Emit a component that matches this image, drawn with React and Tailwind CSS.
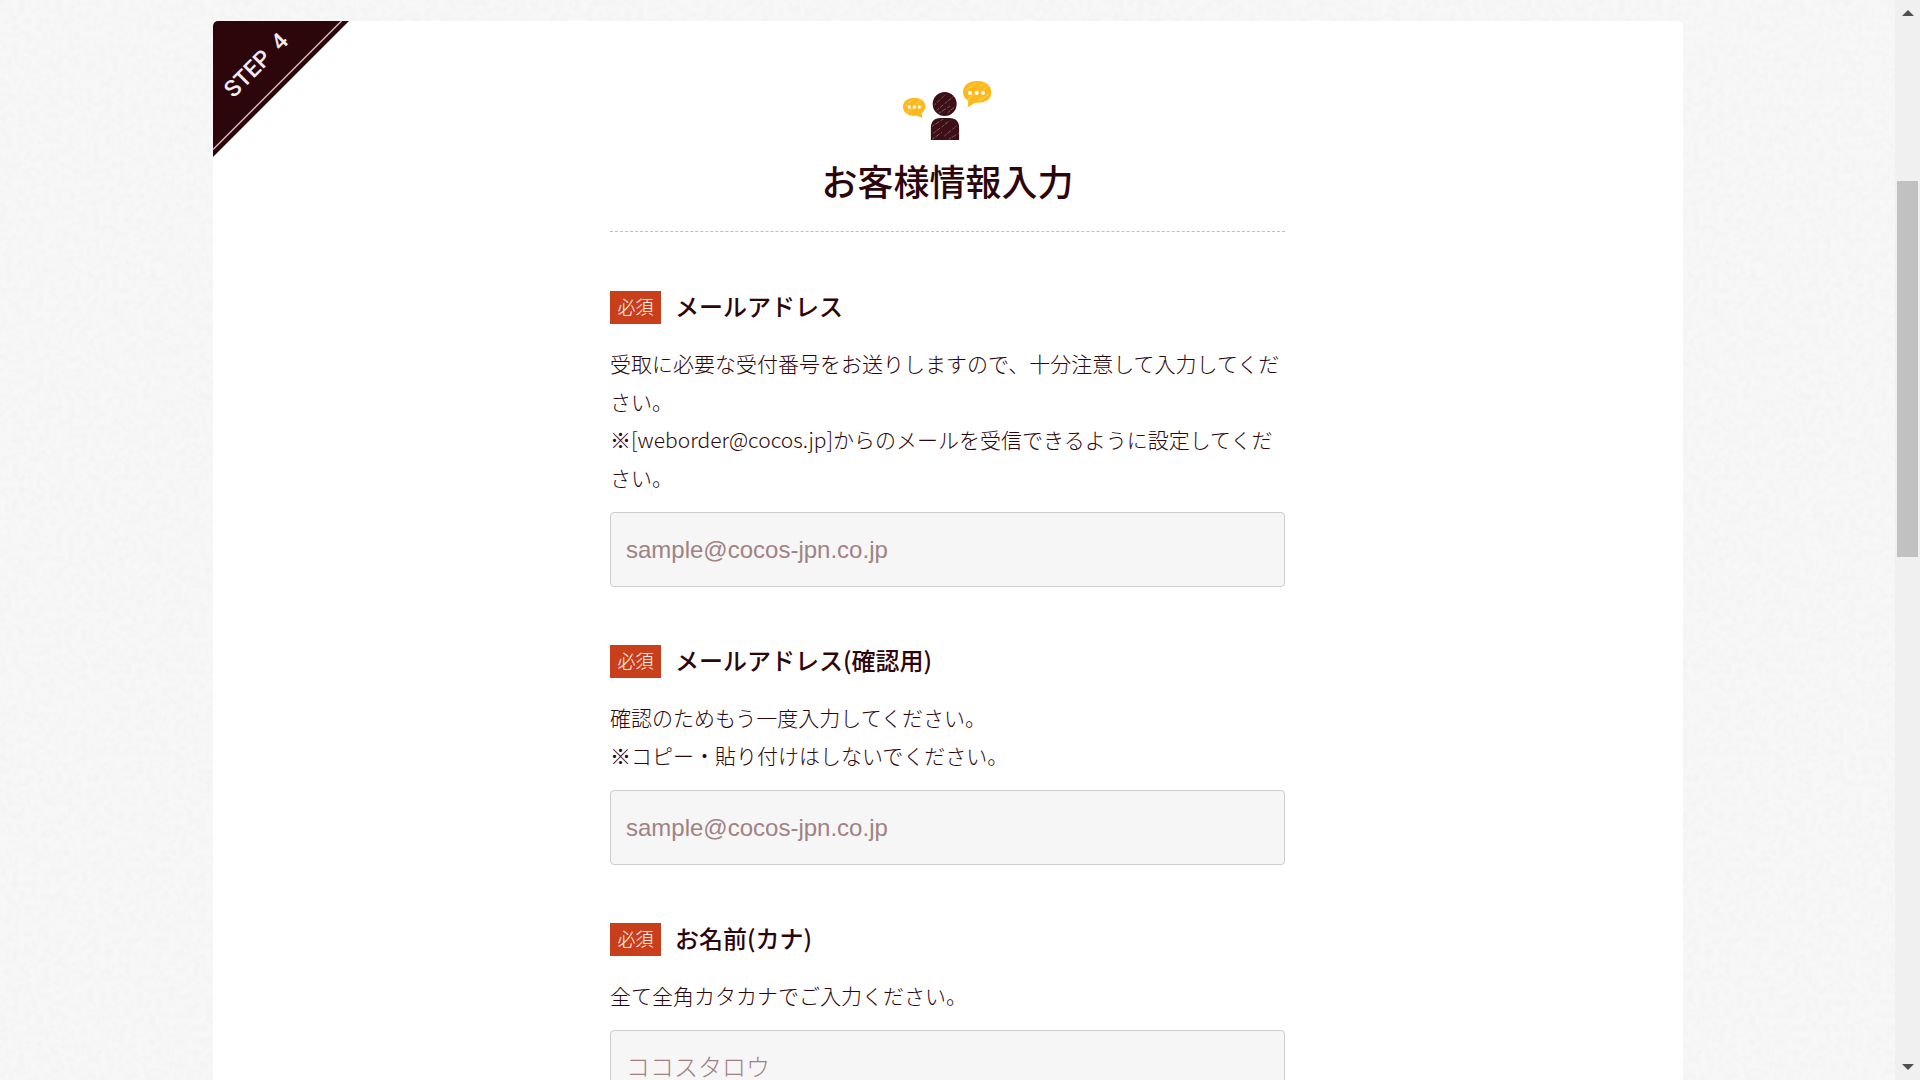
import React from 'react';

const fields = [
  {
    id: 'mail',
    type: 'email',
    label: 'メールアドレス',
    notes: [
      '受取に必要な受付番号をお送りしますので、十分注意して入力してください。',
      '※[weborder@cocos.jp]からのメールを受信できるように設定してください。',
    ],
    placeholder: 'sample@cocos-jpn.co.jp',
  },
  {
    id: 'mail-confirm',
    type: 'email',
    label: 'メールアドレス(確認用)',
    notes: ['確認のためもう一度入力してください。', '※コピー・貼り付けはしないでください。'],
    placeholder: 'sample@cocos-jpn.co.jp',
  },
  {
    id: 'name-kana',
    type: 'text',
    label: 'お名前(カナ)',
    notes: ['全て全角カタカナでご入力ください。'],
    placeholder: 'ココスタロウ',
  },
];

const PaperTexture = () => (
  <svg className="absolute inset-0 w-full h-full" aria-hidden="true">
    <filter id="paper">
      <feTurbulence type="fractalNoise" baseFrequency="0.16" numOctaves="3" seed="4" />
      <feColorMatrix values="0 0 0 0 0.86  0 0 0 0 0.86  0 0 0 0 0.86  1 0 0 0 -0.36" />
    </filter>
    <rect width="100%" height="100%" filter="url(#paper)" />
  </svg>
);

const StepRibbon = () => (
  <svg className="absolute top-0 left-0" width="136" height="136" viewBox="0 0 136 136">
    <path d="M0 0H136L0 136Z" fill="#2d060c" />
    <path d="M128.500 0L0 128.500" stroke="#d3c0c2" strokeWidth="1.400" />
    <text
      transform="translate(43 44) rotate(-45)"
      textAnchor="middle"
      y="8"
      fill="#f3ecec"
      className="text-[23px] font-medium font-['Roboto',sans-serif]"
    >
      STEP <tspan dx="5">4</tspan>
    </text>
  </svg>
);

const CustomerIcon = () => (
  <svg width="90" height="60" viewBox="69 60 270 180" aria-hidden="true">
    <defs>
      <clipPath id="person">
        <circle cx="194" cy="132" r="36" />
        <path d="M152 240V207Q152 174 182 174H208Q238 174 238 207V240Z" />
      </clipPath>
      <clipPath id="bubbles">
        <path d="M103 113C124 113 136 124 136 139C136 148 132 155 125 160L127 174L111 167C84 169 69 157 69 140C69 124 83 113 103 113Z" />
        <path d="M291 63C319 63 334 77 334 97C334 118 317 130 286 128L263 142L265 122C254 116 249 108 249 97C249 77 265 63 291 63Z" />
      </clipPath>
    </defs>
    <g clipPath="url(#person)">
      <rect x="150" y="90" width="92" height="150" fill="#3d1018" />
      <path
        d="M162 136L196 104M170 151L222 108M176 160L212 137M203 158L226 139M156 199L190 177M160 220L210 181M157 237L186 217M193 228L230 198M206 238L236 220"
        fill="none"
        stroke="#7d575d"
        strokeWidth="3"
        strokeDasharray="9 3 14 5"
      />
    </g>
    <g clipPath="url(#bubbles)">
      <rect x="66" y="60" width="270" height="118" fill="#fdb91c" />
      <path
        d="M76 137L98 119M81 157L101 143M106 133L125 119M258 91L286 70M264 119L299 88M300 78L315 69M297 122L328 101M311 88L327 77"
        fill="none"
        stroke="#fecb55"
        strokeWidth="4"
        strokeDasharray="8 3 12 4"
      />
    </g>
    <g fill="#fff">
      <circle cx="88" cy="141" r="5" />
      <circle cx="103" cy="141" r="5" />
      <circle cx="118" cy="141" r="5" />
      <circle cx="270" cy="99" r="6" />
      <circle cx="290" cy="99" r="6" />
      <circle cx="309" cy="99" r="6" />
    </g>
  </svg>
);

const Field = ({ id, type, label, notes, placeholder }) => (
  <div>
    <div className="flex items-center gap-[14px]">
      <span className="w-[51px] bg-[#c93f1b] text-white text-center text-lg leading-[31px] pb-[2px] font-light">
        必須
      </span>
      <label htmlFor={id} className="text-2xl leading-[29px] pb-1 font-medium">
        {label}
      </label>
    </div>
    <div className="mt-5 mb-4 text-[21px] leading-[38px] font-light">
      {notes.map((note) => (
        <p key={note}>{note}</p>
      ))}
    </div>
    <input
      id={id}
      type={type}
      placeholder={placeholder}
      className="block w-full h-[75px] px-[15px] rounded border border-[#cccccc] bg-[#f6f6f6] text-2xl font-light font-['Liberation_Sans','Noto_Sans_CJK_JP',sans-serif] placeholder:text-[#a08283]"
    />
  </div>
);

const ScrollRail = () => (
  <div className="w-[25px] shrink-0 bg-[#f0f0f0] flex flex-col items-center py-[10px]" aria-hidden="true">
    <svg width="12" height="6" viewBox="0 0 12 6">
      <path d="M6 0L12 6H0Z" fill="#505050" />
    </svg>
    <div className="grow-[165] basis-0" />
    <div className="w-[21px] grow-[375] basis-0 bg-[#c1c1c1]" />
    <div className="grow-[507] basis-0" />
    <svg width="12" height="6" viewBox="0 0 12 6">
      <path d="M0 0H12L6 6Z" fill="#505050" />
    </svg>
  </div>
);

const App = () => {
  return (
    <div className="flex h-screen overflow-hidden bg-[#f7f7f7] text-[#2d060c] font-['Noto_Sans_CJK_JP',sans-serif]">
      <main className="relative flex-1 overflow-hidden pt-[21px]">
        <PaperTexture />
        <section className="relative max-w-[1470px] mx-auto bg-white rounded-[5px] overflow-hidden pt-[59px] pb-16">
          <StepRibbon />
          <div className="max-w-[675px] mx-auto">
            {/* Heading */}
            <header className="flex flex-col items-center border-b border-dashed border-[#bfbfbf] pb-6">
              <CustomerIcon />
              <h1 className="mt-[13px] text-4xl leading-[54px] font-medium">お客様情報入力</h1>
            </header>

            {/* Form */}
            <form className="mt-[59px] flex flex-col gap-[58px]">
              {fields.map((field) => (
                <Field key={field.id} {...field} />
              ))}
            </form>
          </div>
        </section>
      </main>
      <ScrollRail />
    </div>
  );
};

export default App;
